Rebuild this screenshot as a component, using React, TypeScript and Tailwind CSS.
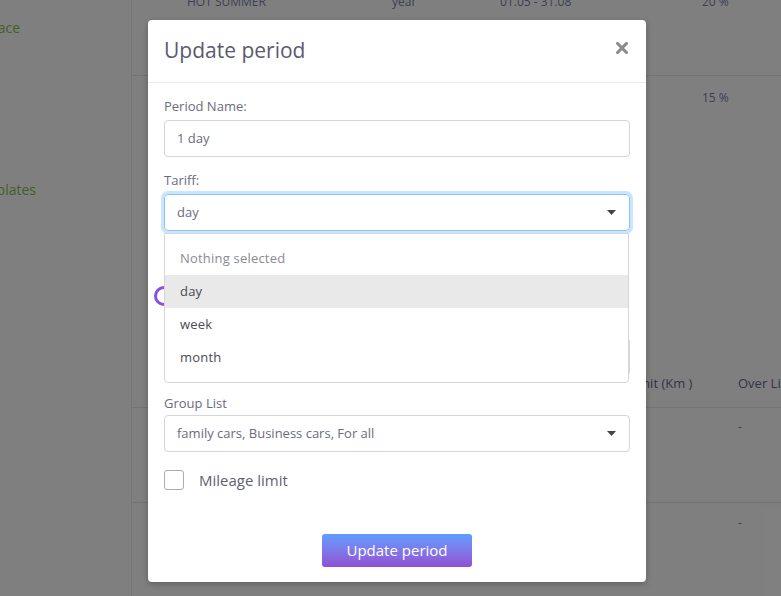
import React from "react";

const font = { fontFamily: '"Open Sans", "Noto Sans", sans-serif' };

function Caret() {
  return (
    <svg width="9" height="5" viewBox="0 0 9 5" className="shrink-0">
      <path d="M0 0 L9 0 L4.5 5 Z" fill="#444" />
    </svg>
  );
}

function Background() {
  return (
    <div className="flex h-[596px] w-[781px] bg-white overflow-hidden">
      <div className="w-[132px] shrink-0 border-r border-[#ececec] overflow-hidden">
        <div className="h-[44px] w-[20px] flex items-center justify-end text-[14px] text-[#86c24c] whitespace-nowrap pt-[10px]">Workspace</div>
        <div className="h-[161px] w-[36px] flex items-end justify-end text-[14px] text-[#86c24c] whitespace-nowrap pb-[5px]">Templates</div>
      </div>
      <div className="flex-1 flex flex-col text-[12px] text-[#7a7fa8]">
        <div className="h-[83px] border-b border-[#e6e6ee] flex -mt-[7px] pl-[55px]">
          <div className="w-[205px]">HOT SUMMER</div>
          <div className="w-[108px]">year</div>
          <div className="w-[202px]">01.05 - 31.08</div>
          <div>20 %</div>
        </div>
        <div className="h-[147px] flex pl-[570px] pt-[13px]">
          <div>15 %</div>
        </div>
        <div className="h-[0px] flex justify-end">
          <div className="-mt-[24px] w-[12px] h-[30px] border border-[#ccc] rounded-l-[4px] border-r-0"></div>
        </div>
        <div className="h-[137px]"></div>
        <div className="h-[48px] border-b border-[#e6e6ee] flex items-center pl-[496px] text-[13px] text-[#666a88] font-medium whitespace-nowrap">
          <div className="w-[110px]">Limit (Km )</div>
          <div>Over Limit</div>
        </div>
        <div className="h-[95px] border-b border-[#e6e6ee] flex pl-[606px] pt-[10px]">
          <div>-</div>
        </div>
        <div className="flex pl-[606px] pt-[11px]">
          <div>-</div>
        </div>
      </div>
    </div>
  );
}

function Label({ children }: { children: React.ReactNode }) {
  return <div className="text-[13px] leading-[20px] text-[#6b6b7d] mb-[4px]">{children}</div>;
}

export default function App() {
  return (
    <div className="relative w-[781px] h-[596px] overflow-hidden" style={font}>
      <Background />
      <div className="absolute inset-0 bg-black/50 pl-[148px] pt-[20px]">
        <div className="w-[498px] h-[562px] bg-white rounded-[4px] flex flex-col shadow-[0_2px_6px_rgba(0,0,0,0.25)]">
          <div className="h-[63px] shrink-0 border-b border-[#e9ecef] flex items-center justify-between pl-[16px] pr-[18px]">
            <div className="text-[21px] text-[#5a5a70] pb-[1px]">Update period</div>
            <svg width="12" height="12" viewBox="0 0 12 12" className="-mt-[6px]">
              <path d="M1.5 1.5 L10.5 10.5 M10.5 1.5 L1.5 10.5" stroke="#8a8a8a" strokeWidth="3" strokeLinecap="square" />
            </svg>
          </div>
          <div className="flex-1 flex flex-col px-[16px] pt-[13px]">
            <Label>Period Name:</Label>
            <div className="h-[37px] border border-[#d4d4dc] rounded-[4px] flex items-center px-[12px] text-[13px] text-[#6b6b7d]">1 day</div>

            <div className="mt-[13px]">
              <Label>Tariff:</Label>
              <div className="relative">
                <div className="h-[37px] border border-[#86c5fa] rounded-[4px] shadow-[0_0_0_3px_rgba(100,180,255,0.35)] flex items-center justify-between pl-[12px] pr-[13px] text-[13px] text-[#6b6b7d]">
                  <span>day</span>
                  <Caret />
                </div>
                <div className="absolute z-10 left-0 right-[1px] top-full mt-[2px] bg-white border border-[#d6d6d6] rounded-b-[4px] py-[8px] text-[13px] tracking-[0.2px]">
                  <div className="h-[33px] flex items-center pl-[15px] text-[#8a8a92]">Nothing selected</div>
                  <div className="h-[33px] flex items-center pl-[15px] bg-[#e9e9e9] text-[#4a4a55]">day</div>
                  <div className="h-[33px] flex items-center pl-[15px] text-[#4a4a55]">week</div>
                  <div className="h-[33px] flex items-center pl-[15px] text-[#4a4a55]">month</div>
                </div>
              </div>
            </div>

            <div className="mt-[13px] h-[138px] flex flex-col">
              <Label>Price:</Label>
              <div className="h-[40px] flex items-center -ml-[10px] pt-[16px]">
                <div className="w-[20px] h-[20px] rounded-full border-[3px] border-[#8a4fe0]"></div>
              </div>
              <div className="mt-[6px]">
                <Label>Deposit</Label>
              </div>
              <div className="h-[37px] border border-[#d4d4dc] rounded-[4px] border-l-[#8a4fe0]"></div>
            </div>

            <div className="mt-[11px]">
              <div className="text-[13px] leading-[20px] text-[#6b6b7d] mb-[2px]">Group List</div>
              <div className="h-[37px] border border-[#d4d4dc] rounded-[4px] flex items-center justify-between pl-[12px] pr-[13px] text-[13px] text-[#6b6b7d]">
                <span>family cars, Business cars, For all</span>
                <Caret />
              </div>
            </div>

            <div className="mt-[17px] flex items-center">
              <div className="w-[20px] h-[20px] border border-[#a9a9b8] rounded-[3px]"></div>
              <div className="ml-[15px] text-[15px] text-[#5f5f72]">Mileage limit</div>
            </div>

            <div className="mt-[42px] flex justify-center">
              <button className="w-[150px] h-[33px] rounded-[3px] text-white text-[15px] font-medium bg-gradient-to-b from-[#5b9dff] to-[#8f4fd4]">
                Update period
              </button>
            </div>
          </div>
        </div>
      </div>
    </div>
  );
}
